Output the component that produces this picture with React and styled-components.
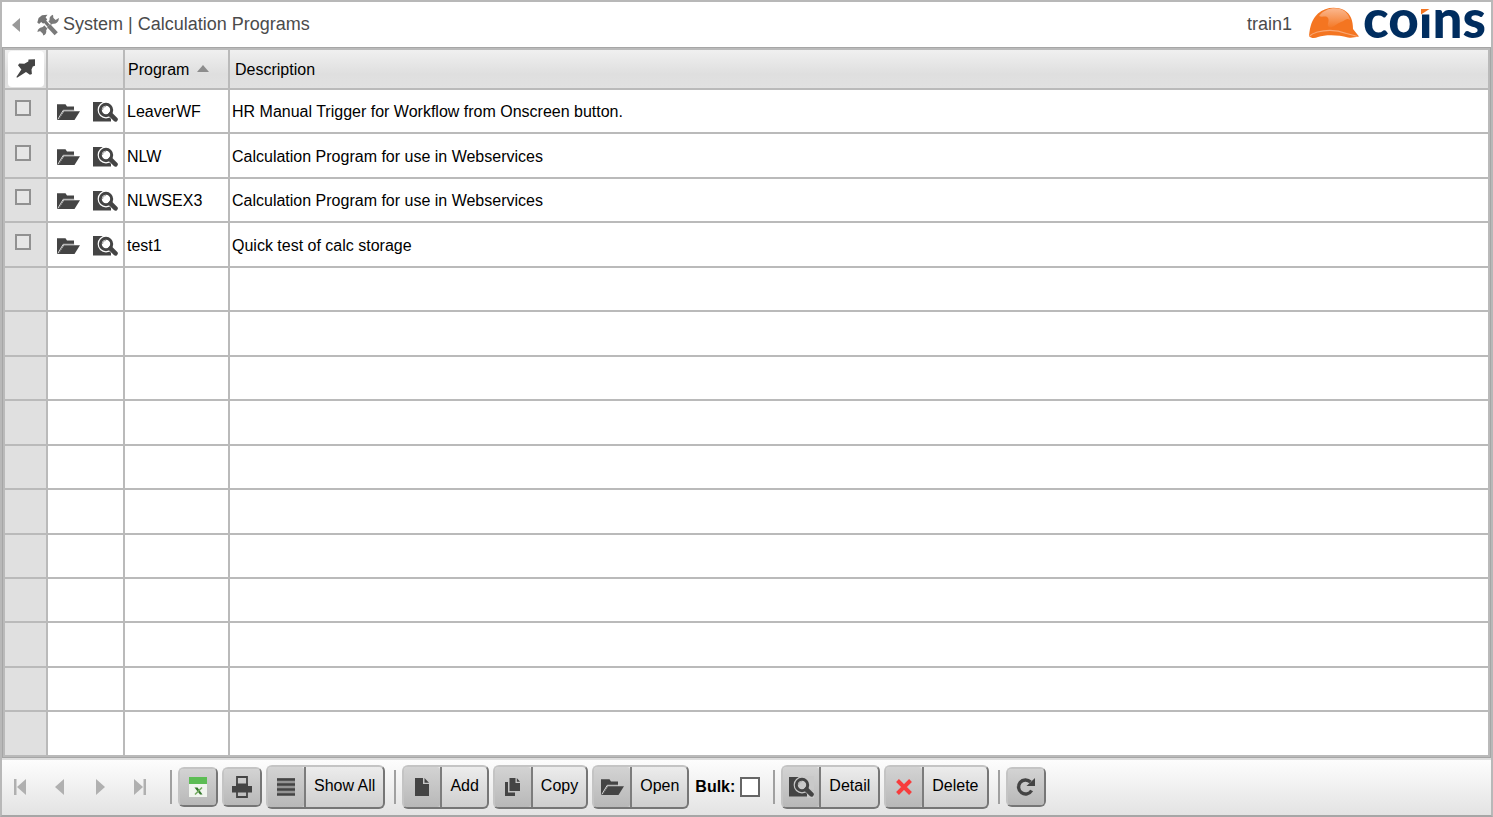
import React from "react";
import styled, { createGlobalStyle, css } from "styled-components";

const GlobalStyle = createGlobalStyle`
  *, *::before, *::after { box-sizing: border-box; }
  body { margin: 0; background: #fff; }
  body, button, input { font-family: "Liberation Sans", Arial, sans-serif; font-size: 16px; }
`;

const Frame = styled.div`
  display: flex;
  flex-direction: column;
  min-height: 100vh;
  border: 2px solid #b8b8b8;
  border-bottom-color: #a6a6a6;
  color: #000;
`;

const Header = styled.header`
  display: flex;
  align-items: center;
  height: 45px;
  padding: 0 6px 0 8px;
  color: #4b4b4b;
`;

const PlainButton = styled.button`
  display: flex;
  align-items: center;
  justify-content: center;
  padding: 0;
  border: 0;
  background: none;
  cursor: pointer;
`;

const BackButton = styled(PlainButton)`
  width: 12px;
  height: 24px;
  margin-right: 15px;
`;

const Title = styled.h1`
  flex: 1;
  margin: 0 0 0 4px;
  padding-bottom: 2px;
  font-size: 18px;
  line-height: 24px;
  font-weight: 400;
`;

const User = styled.span`
  margin-right: 15px;
  padding-bottom: 2px;
  font-size: 18px;
  line-height: 24px;
`;

const GridPanel = styled.main`
  flex: 1;
  display: flex;
  border: 1px solid #a6a6a6;
`;

const Grid = styled.table`
  flex: 1;
  width: 100%;
  table-layout: fixed;
  border-collapse: separate;
  border-spacing: 0;
  border: 2px solid #bababa;
  border-right: 0;
  border-bottom: 0;
`;

const Col = styled.col`
  width: ${(p) => p.$width};
`;

const HeadRow = styled.tr`
  height: 40px;
  background: linear-gradient(#f0f0f0, #dfdfdf 60%, #e1e1e1);
`;

const HeadCell = styled.th`
  padding: 2px 5px 0 ${(p) => p.$left || "5px"};
  border-right: 2px solid #bababa;
  border-bottom: 2px solid #bababa;
  text-align: left;
  font-weight: 400;
  line-height: 20px;
`;

const PinCell = styled(HeadCell)`
  padding: 0 0 0 3px;
`;

const PinButton = styled(PlainButton)`
  width: 36px;
  height: 36px;
  border-radius: 4px;
  background: #fff;
`;

const SortButton = styled(PlainButton)`
  gap: 8px;
  line-height: 20px;
`;

const SortArrow = styled.svg`
  margin-bottom: 4px;
`;

const Row = styled.tr`
  height: 44px;
`;

const Cell = styled.td`
  padding: 2px 2px 0;
  border-right: 2px solid #bababa;
  border-bottom: 2px solid #bababa;
  line-height: 20px;
  ${(p) => p.$select && css`
    padding: 0 0 6px 10px;
    background: #e0e0e0;
  `}
`;

const RowCheck = styled.input`
  appearance: none;
  display: block;
  width: 16px;
  height: 16px;
  margin: 0;
  border: 2px solid #919191;
  background: #e6e6e6;
  &:checked { background: #919191; }
`;

const RowActions = styled.div`
  display: flex;
  align-items: center;
  gap: 12px;
  padding-left: 6px;
`;

const Toolbar = styled.footer`
  display: flex;
  align-items: center;
  height: 57px;
  padding: 0 6px 2px;
  border-top: 2px solid #dedede;
  background: linear-gradient(#fdfdfd, #e3e3e3);
`;

const Pager = styled.nav`
  display: flex;
  gap: 16px;
`;

const PageButton = styled(PlainButton)`
  width: 24px;
  height: 36px;
`;

const Divider = styled.span`
  width: 2px;
  height: 34px;
  margin: 0 6px 0 9px;
  background: #a0a0a0;
  ${(p) => p.$wide && css`margin-left: 18px;`}
`;

const Tools = styled.div`
  display: flex;
  align-items: center;
  gap: 4px;
`;

const ToolButton = styled.button`
  display: flex;
  align-items: stretch;
  height: ${(p) => (p.$iconOnly ? "40px" : "44px")};
  padding: 0;
  border: 2px solid #c4c4c4;
  border-right-color: #767676;
  border-bottom-color: #767676;
  border-radius: 6px;
  background: linear-gradient(#ececec, #cfcfcf);
  color: #000;
  cursor: pointer;
`;

const ToolIcon = styled.span`
  display: flex;
  align-items: center;
  justify-content: center;
  width: 36px;
  border-radius: 3px;
  background: linear-gradient(#d3d3d3, #b8b8b8);
`;

const ToolLabel = styled.span`
  padding: 0 8px;
  border-left: 2px solid #7c7c7c;
  line-height: 38px;
`;

const BulkLabel = styled.label`
  display: flex;
  align-items: center;
  gap: 5px;
  padding: 0 4px 0 2px;
  font-weight: 700;
  line-height: 20px;
`;

const BulkCheck = styled.input`
  appearance: none;
  width: 20px;
  height: 20px;
  margin: 0;
  border: 2px solid #666;
  background: #fff;
  &:checked { background: #666; }
`;

const DARK = "#444";

const BackIcon = () => (
  <svg width="8" height="14" viewBox="0 0 8 14" aria-hidden="true">
    <path d="M8 0v14L0 7z" fill="#999" />
  </svg>
);

const ToolsIcon = () => (
  <svg width="22" height="22" viewBox="0 0 22 22" aria-hidden="true">
    <path d="M4 17.8 17 5.2" stroke="#7a7a7a" strokeWidth="4.6" />
    <path d="M16 .8a5 5 0 0 0-3.300 5.800l2.700 2.800A5 5 0 0 0 21.800 4l-3.200 2-2.200-2z" fill="#7a7a7a" />
    <path d="M6.200 21.500a5 5 0 0 0 3-5.600l-2.600-2.400A5 5 0 0 0 .4 18l3-1 2.200 1.800z" fill="#7a7a7a" />
    <path d="m8.500 8.500 11 11.500" stroke="#fff" strokeWidth="5.600" />
    <path d="M.3 8.500 1.600 4 5 1.200 10.500.8 8.600 3.200l1.600 2.300-4 4.200-2-1.800-2.100 2.200z" fill="#747474" />
    <path d="m7 6.500 4.500 5" stroke="#747474" strokeWidth="3.200" />
    <path d="m11.500 11.500 7.700 8.200" stroke="#7a7a7a" strokeWidth="4.400" />
  </svg>
);

const PinIcon = () => (
  <svg width="20" height="20" viewBox="0 0 20 20" aria-hidden="true">
    <path d="M12.500.6 19 .2v6.600l-2.200.8-1.300 3 .4 4.500-2 .7-3.900-2.800L1 18.700.4 18l5-7.600-3.400-4.200 1.300-1.700 5 .3 4-2.200z" fill={DARK} />
  </svg>
);

const SortIcon = () => (
  <SortArrow width="12" height="7" viewBox="0 0 12 7" aria-hidden="true">
    <path d="M6 0l6 7H0z" fill="#8d8d8d" />
  </SortArrow>
);

const FolderIcon = () => (
  <svg width="24" height="18" viewBox="0 0 24 18" aria-hidden="true">
    <path d="M1 17V1.200h8.500l1.500 2.200h7V8H7.500L3 17z" fill={DARK} />
    <path d="M18.500 7.300H7.200L1.800 16.500" fill="none" stroke="#d8d8d8" strokeWidth="1" />
    <path d="M8 8.200h16L18.500 17H2.600z" fill={DARK} />
  </svg>
);

const DetailIcon = ({ halo = "#fff" }) => (
  <svg width="26" height="22" viewBox="0 0 26 22" aria-hidden="true">
    <path d="M1 1h18v19.500H1z" fill={DARK} />
    <circle cx="14" cy="9" r="8.400" fill={halo} />
    <path d="M17 0h9v15h-9zM14 12l5 6v4h7v-8z" fill={halo} />
    <circle cx="14" cy="9" r="5.700" fill="none" stroke={DARK} strokeWidth="3" />
    <path d="M10.500 9A3.500 3.500 0 0 1 14 5.500" fill="none" stroke="#aaa" strokeWidth="1.200" />
    <path d="m18.500 13.500 5 4.800" stroke={DARK} strokeWidth="4.600" strokeLinecap="round" />
  </svg>
);

const StepIcon = ({ back, end }) => (
  <svg width="14" height="16" viewBox="0 0 14 16" aria-hidden="true">
    <g fill="#b0b0b0" transform={back ? "matrix(-1 0 0 1 14 0)" : undefined}>
      <path d={end ? "M1 0l9 8-9 8z" : "M3 0l9 8-9 8z"} />
      {end && <path d="M10.500 0H13v16h-2.500z" />}
    </g>
  </svg>
);

const SheetIcon = () => (
  <svg width="20" height="22" viewBox="0 0 20 22" aria-hidden="true">
    <path d="M1 1h18v20H1z" fill="#f1f5ef" />
    <path d="M1 1h18v7H1z" fill="#5cbd54" />
    <path d="M6.500 11.500h3l5 7H12z" fill="#34782b" />
    <path d="m7 18.500 7-7" stroke="#74ab60" strokeWidth="1.600" />
  </svg>
);

const PrintIcon = () => (
  <svg width="22" height="22" viewBox="0 0 22 22" aria-hidden="true">
    <path d="M6 9V1h10v8M6 15v6h10v-6" fill="none" stroke={DARK} strokeWidth="1.800" />
    <path d="M5 7.500h12V10h4v6.500H1V10h4z" fill={DARK} />
  </svg>
);

const LinesIcon = () => (
  <svg width="20" height="20" viewBox="0 0 20 20" aria-hidden="true">
    <path d="M1 1h18v17H1z" fill="#949494" />
    <path d="M1 2.500h18M1 7.500h18M1 12.500h18M1 17.500h18" stroke={DARK} strokeWidth="2.600" />
  </svg>
);

const PageIcon = () => (
  <svg width="16" height="18" viewBox="0 0 16 18" aria-hidden="true">
    <path d="M1 0h8v6h6v12H1z" fill={DARK} />
    <path d="M10.500 0 15 4.800h-4.500z" fill={DARK} />
  </svg>
);

const CopyIcon = () => (
  <svg width="18" height="20" viewBox="0 0 18 20" aria-hidden="true">
    <path d="M1 5h3v10.500h7V19H1z" fill={DARK} />
    <path d="M5.500 1h6v5H16v8H5.500z" fill={DARK} />
    <path d="M12.800 1 16 4.700h-3.200z" fill={DARK} />
  </svg>
);

const CrossIcon = () => (
  <svg width="18" height="18" viewBox="0 0 18 18" aria-hidden="true">
    <path d="m2.500 2.500 13 13M15.500 2.500l-13 13" stroke="#f73c3c" strokeWidth="4" />
  </svg>
);

const RefreshIcon = () => (
  <svg width="20" height="20" viewBox="0 0 20 20" aria-hidden="true">
    <path d="M15.600 13.500A7 7 0 1 1 14.500 5" fill="none" stroke={DARK} strokeWidth="3.400" />
    <path d="M19 1v8h-8.500z" fill={DARK} />
  </svg>
);

const LogoSvg = styled.svg`
  overflow: hidden;
`;

const CoinsLogo = () => (
  <LogoSvg width="178" height="45" viewBox="0 0 178 45" role="img" aria-label="coins">
    <defs>
      <linearGradient id="shine" x1="0" y1="0" x2="0" y2="1">
        <stop offset="0" stopColor="#fbb78e" />
        <stop offset="1" stopColor="#f47a28" />
      </linearGradient>
    </defs>
    <path d="M2 34C3 24 5 17 11 11.500 18 5 29 4 37 8c7 4 9 11 9 19l6 7.500c-5 1-7 1.500-11 1-10-3-23-3-30-.5-3 1.500-7 1.500-9-1z" fill="#f47521" />
    <path d="M12 14C17 7 26 5 33 7c6 2 9 6 10 11-4-3-5 1-9 2-5 2-9 7-12 5s1-6-1-9-6 0-9-2z" fill="url(#shine)" />
    <path d="M2.500 34c3-2.500 5-3 8-4 9-2.500 20-2 29 1.500 4 1 8 2 11 3" fill="none" stroke="#f9a773" strokeWidth="1.200" />
    <text x="56" y="36" fill="#002d5f" fontFamily="Lato, sans-serif" fontWeight="900" fontSize="53">coins</text>
    <path d="M111 0h14v12.500h-14z" fill="#fff" />
    <path d="M114 7h8.500L114 12.500z" fill="#f47521" />
  </LogoSvg>
);

const programs = [
  { name: "LeaverWF", description: "HR Manual Trigger for Workflow from Onscreen button." },
  { name: "NLW", description: "Calculation Program for use in Webservices" },
  { name: "NLWSEX3", description: "Calculation Program for use in Webservices" },
  { name: "test1", description: "Quick test of calc storage" },
];
const PAGE_SIZE = 15;
const rows = Array.from({ length: PAGE_SIZE }, (_, i) => programs[i]);

const Tool = ({ icon, label, name }) => (
  <ToolButton type="button" $iconOnly={!label} aria-label={label ? undefined : name}>
    <ToolIcon>{icon}</ToolIcon>
    {label && <ToolLabel>{label}</ToolLabel>}
  </ToolButton>
);

export default function App() {
  return (
    <Frame>
      <GlobalStyle />
      <Header>
        <BackButton type="button" aria-label="Back"><BackIcon /></BackButton>
        <ToolsIcon />
        <Title>System | Calculation Programs</Title>
        <User>train1</User>
        <CoinsLogo />
      </Header>

      <GridPanel>
        <Grid>
          <colgroup>
            <Col $width="43px" />
            <Col $width="77px" />
            <Col $width="105px" />
            <Col $width="auto" />
          </colgroup>
          <thead>
            <HeadRow>
              <PinCell>
                <PinButton type="button" aria-label="Pin"><PinIcon /></PinButton>
              </PinCell>
              <HeadCell aria-label="Actions" />
              <HeadCell $left="3px">
                <SortButton type="button">Program <SortIcon /></SortButton>
              </HeadCell>
              <HeadCell>Description</HeadCell>
            </HeadRow>
          </thead>
          <tbody>
            {rows.map((row, i) => (
              <Row key={i}>
                <Cell $select>
                  {row && <RowCheck type="checkbox" aria-label={`Select ${row.name}`} />}
                </Cell>
                <Cell>
                  {row && (
                    <RowActions>
                      <PlainButton type="button" aria-label={`Open ${row.name}`}><FolderIcon /></PlainButton>
                      <PlainButton type="button" aria-label={`Detail of ${row.name}`}><DetailIcon /></PlainButton>
                    </RowActions>
                  )}
                </Cell>
                <Cell>{row?.name}</Cell>
                <Cell>{row?.description}</Cell>
              </Row>
            ))}
          </tbody>
        </Grid>
      </GridPanel>

      <Toolbar>
        <Pager aria-label="Pages">
          <PageButton type="button" aria-label="First page"><StepIcon back end /></PageButton>
          <PageButton type="button" aria-label="Previous page"><StepIcon back /></PageButton>
          <PageButton type="button" aria-label="Next page"><StepIcon /></PageButton>
          <PageButton type="button" aria-label="Last page"><StepIcon end /></PageButton>
        </Pager>
        <Divider $wide />
        <Tools>
          <Tool icon={<SheetIcon />} name="Export to spreadsheet" />
          <Tool icon={<PrintIcon />} name="Print" />
          <Tool icon={<LinesIcon />} label="Show All" />
        </Tools>
        <Divider />
        <Tools>
          <Tool icon={<PageIcon />} label="Add" />
          <Tool icon={<CopyIcon />} label="Copy" />
          <Tool icon={<FolderIcon />} label="Open" />
          <BulkLabel>Bulk: <BulkCheck type="checkbox" /></BulkLabel>
        </Tools>
        <Divider />
        <Tools>
          <Tool icon={<DetailIcon halo="#c9c9c9" />} label="Detail" />
          <Tool icon={<CrossIcon />} label="Delete" />
        </Tools>
        <Divider />
        <Tool icon={<RefreshIcon />} name="Refresh" />
      </Toolbar>
    </Frame>
  );
}
